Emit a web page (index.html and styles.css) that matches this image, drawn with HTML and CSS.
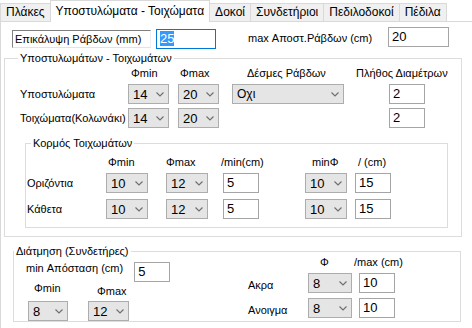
FILE: index.html
```html
<!DOCTYPE html>
<html lang="el">
<head>
    <meta charset="UTF-8">
    <meta name="viewport" content="width=device-width, initial-scale=1.0">
    <title>Υποστυλώματα - Τοιχώματα</title>
    <link rel="stylesheet" href="styles.css">
</head>
<body>

    <!-- Tab strip -->
    <div class="tabs">
        <div class="tab">Πλάκες</div>
        <div class="tab active">Υποστυλώματα - Τοιχώματα</div>
        <div class="tab">Δοκοί</div>
        <div class="tab">Συνδετήριοι</div>
        <div class="tab">Πεδιλοδοκοί</div>
        <div class="tab">Πέδιλα</div>
    </div>

    <div class="page">

        <!-- Cover / spacing -->
        <div class="top-row">
            <div class="label-box">Επικάλυψη Ράβδων (mm)</div>
            <div class="textbox cover focused"><span class="sel">25</span></div>
            <div class="max-label">max Αποστ.Ράβδων (cm)</div>
            <div class="textbox spacing">20</div>
        </div>

        <!-- Columns and walls -->
        <fieldset class="group main-group">
            <legend>Υποστυλωμάτων - Τοιχωμάτων</legend>
            <div class="main-grid">
                <span></span>
                <span class="head h-fmin">Φmin</span>
                <span class="head h-fmax">Φmax</span>
                <span class="head h-bundle">Δέσμες Ράβδων</span>
                <span class="head h-count">Πλήθος Διαμέτρων</span>

                <span class="row-label">Υποστυλώματα</span>
                <div class="combo"><span>14</span><svg class="arrow" viewBox="0 0 8 5"><polyline points="0.5,0.5 4,4 7.5,0.5"/></svg></div>
                <div class="combo"><span>20</span><svg class="arrow" viewBox="0 0 8 5"><polyline points="0.5,0.5 4,4 7.5,0.5"/></svg></div>
                <div class="combo bundle"><span>Οχι</span><svg class="arrow" viewBox="0 0 8 5"><polyline points="0.5,0.5 4,4 7.5,0.5"/></svg></div>
                <div class="textbox small">2</div>

                <span class="row-label">Τοιχώματα(Κολωνάκι)</span>
                <div class="combo"><span>14</span><svg class="arrow" viewBox="0 0 8 5"><polyline points="0.5,0.5 4,4 7.5,0.5"/></svg></div>
                <div class="combo"><span>20</span><svg class="arrow" viewBox="0 0 8 5"><polyline points="0.5,0.5 4,4 7.5,0.5"/></svg></div>
                <span></span>
                <div class="textbox small">2</div>
            </div>

            <fieldset class="group web-group">
                <legend>Κορμός Τοιχωμάτων</legend>
                <div class="web-grid">
                    <span></span>
                    <span class="head w-fmin">Φmin</span>
                    <span class="head w-fmax">Φmax</span>
                    <span class="head w-min">/min(cm)</span>
                    <span class="head w-minf">minΦ</span>
                    <span class="head w-max">/ (cm)</span>

                    <span class="row-label">Οριζόντια</span>
                    <div class="combo"><span>10</span><svg class="arrow" viewBox="0 0 8 5"><polyline points="0.5,0.5 4,4 7.5,0.5"/></svg></div>
                    <div class="combo"><span>12</span><svg class="arrow" viewBox="0 0 8 5"><polyline points="0.5,0.5 4,4 7.5,0.5"/></svg></div>
                    <div class="textbox small">5</div>
                    <div class="combo"><span>10</span><svg class="arrow" viewBox="0 0 8 5"><polyline points="0.5,0.5 4,4 7.5,0.5"/></svg></div>
                    <div class="textbox small">15</div>

                    <span class="row-label">Κάθετα</span>
                    <div class="combo"><span>10</span><svg class="arrow" viewBox="0 0 8 5"><polyline points="0.5,0.5 4,4 7.5,0.5"/></svg></div>
                    <div class="combo"><span>12</span><svg class="arrow" viewBox="0 0 8 5"><polyline points="0.5,0.5 4,4 7.5,0.5"/></svg></div>
                    <div class="textbox small">5</div>
                    <div class="combo"><span>10</span><svg class="arrow" viewBox="0 0 8 5"><polyline points="0.5,0.5 4,4 7.5,0.5"/></svg></div>
                    <div class="textbox small">15</div>
                </div>
            </fieldset>
        </fieldset>

        <!-- Shear (stirrups) -->
        <fieldset class="group shear-group">
            <legend>Διάτμηση (Συνδετήρες)</legend>
            <div class="shear-body">
                <div class="shear-left">
                    <div class="dist-row">
                        <span>min Απόσταση (cm)</span>
                        <div class="textbox small dist">5</div>
                    </div>
                    <div class="phi-grid">
                        <span class="head s-fmin">Φmin</span>
                        <span class="head s-fmax">Φmax</span>
                        <div class="combo s-combo"><span>8</span><svg class="arrow" viewBox="0 0 8 5"><polyline points="0.5,0.5 4,4 7.5,0.5"/></svg></div>
                        <div class="combo"><span>12</span><svg class="arrow" viewBox="0 0 8 5"><polyline points="0.5,0.5 4,4 7.5,0.5"/></svg></div>
                    </div>
                </div>
                <div class="shear-right">
                    <span></span>
                    <span class="head r-phi">Φ</span>
                    <span class="head r-max">/max (cm)</span>

                    <span class="row-label low">Ακρα</span>
                    <div class="combo wide"><span>8</span><svg class="arrow" viewBox="0 0 8 5"><polyline points="0.5,0.5 4,4 7.5,0.5"/></svg></div>
                    <div class="textbox small">10</div>

                    <span class="row-label low">Ανοιγμα</span>
                    <div class="combo wide"><span>8</span><svg class="arrow" viewBox="0 0 8 5"><polyline points="0.5,0.5 4,4 7.5,0.5"/></svg></div>
                    <div class="textbox small">10</div>
                </div>
            </div>
        </fieldset>

    </div>

</body>
</html>
```

FILE: styles.css
```css
body {
    margin: 0;
    font-family: "Liberation Sans", Arial, sans-serif;
    font-size: 11px;
    color: #000;
    background-color: #fff;
    overflow: hidden;
}

/* Tab strip */
.tabs {
    display: flex;
    align-items: flex-end;
    height: 21px;
    padding-left: 1px;
    font-size: 12px;
}

.tab {
    height: 18px;
    line-height: 17px;
    padding: 0 5px;
    margin-left: -1px;
    border: 1px solid #d9d9d9;
    border-bottom: none;
    background-color: #f0f0f0;
    box-sizing: border-box;
    white-space: nowrap;
}

.tab.active {
    position: relative;
    z-index: 1;
    height: 22px;
    line-height: 20px;
    margin-bottom: -1px;
    padding: 0 5px;
    font-size: 12px;
    background-color: #fff;
}

.page {
    border-top: 1px solid #d9d9d9;
    border-left: 1px solid #d9d9d9;
    height: 400px;
}

/* Shared controls */
.combo {
    display: flex;
    align-items: center;
    justify-content: space-between;
    width: 41px;
    height: 20px;
    padding: 0 4px 0 4px;
    border: 1px solid #adadad;
    background-color: #e5e5e5;
    box-sizing: border-box;
    font-size: 13px;
}

.combo.bundle {
    width: 112px;
    font-size: 12px;
}

.combo.wide {
    width: 44px;
}

.arrow {
    width: 8px;
    height: 5px;
    fill: none;
    stroke: #707070;
    stroke-width: 1.2;
}

.textbox {
    height: 20px;
    padding: 1px 0 0 3px;
    border: 1px solid #a5a5a5;
    background-color: #fff;
    box-sizing: border-box;
    line-height: 15px;
    font-size: 13px;
}

.textbox.small {
    width: 36px;
}

.textbox.focused {
    border-color: #0078d7;
}

.sel {
    background-color: #3399ff;
    color: #fff;
}

.head {
    line-height: 13px;
    white-space: nowrap;
}

.row-label {
    line-height: 20px;
    white-space: nowrap;
}

.row-label.low {
    padding-top: 2px;
}

/* Group boxes */
.group {
    margin: 0;
    padding: 0;
    border: 1px solid #dcdcdc;
    box-sizing: border-box;
}

.group legend {
    padding: 0 2px;
    line-height: 14px;
}

/* Top row */
.top-row {
    display: flex;
    align-items: flex-start;
    padding-top: 5px;
}

.label-box {
    margin: 3px 0 0 11px;
    width: 139px;
    height: 18px;
    line-height: 16px;
    padding-left: 2px;
    border: 1px solid;
    border-color: #808080 #f0f0f0 #e3e3e3 #808080;
    box-sizing: border-box;
    white-space: nowrap;
}

.textbox.cover {
    margin: 2px 0 0 5px;
    width: 60px;
}

.max-label {
    width: 140px;
    margin: 5px 0 0 32px;
    white-space: nowrap;
}

.textbox.spacing {
    width: 61px;
    height: 20px;
}

/* Υποστυλωμάτων - Τοιχωμάτων */
.main-group {
    width: 458px;
    margin: 2px 0 0 3px;
}

.main-group > legend {
    margin-left: 13px;
}

.main-grid {
    display: grid;
    grid-template-columns: 108px 50px 54px 157px 35px;
    row-gap: 4px;
    align-items: start;
    padding: 2px 0 0 15px;
}

.h-fmin { margin-left: 3px; }
.h-fmax { margin-left: 2px; }
.h-bundle { margin-left: 15px; }
.h-count { margin-left: -33px; }

/* Κορμός Τοιχωμάτων */
.web-group {
    width: 423px;
    margin: 8px 0 8px 20px;
}

.web-group > legend {
    margin-left: 5px;
}

.web-grid {
    display: grid;
    grid-template-columns: 79px 60px 57px 82px 50px auto;
    grid-template-rows: 17px 26px 20px;
    align-items: start;
    padding: 6px 0 8px 1px;
}

.web-grid .combo {
    width: 42px;
}

.w-fmin { margin-left: 2px; }
.w-min { margin-left: -2px; }
.w-minf { margin-left: 7px; }
.w-max { margin-left: 3px; }

/* Διάτμηση (Συνδετήρες) */
.shear-group {
    width: 448px;
    margin: 7px 0 0 12px;
}

.shear-body {
    display: flex;
    align-items: flex-start;
    padding-left: 12px;
}

.shear-left {
    width: 222px;
    padding-top: 4px;
}

.dist-row {
    display: flex;
    align-items: flex-start;
}

.textbox.dist {
    margin-left: 11px;
}

.phi-grid {
    display: grid;
    grid-template-columns: 62px 60px;
    grid-template-rows: 19px 20px;
    align-items: start;
}

.s-fmin { margin-left: 8px; }
.s-fmax { margin: 3px 0 0 9px; }

.s-combo {
    margin-left: 2px;
    width: 40px;
}

.shear-right {
    display: grid;
    grid-template-columns: 60px 51px 36px;
    grid-template-rows: 17px 25px 20px;
    align-items: start;
    margin-top: -2px;
}

.r-phi { margin-left: 12px; }
.r-max { margin-left: -5px; }
```
